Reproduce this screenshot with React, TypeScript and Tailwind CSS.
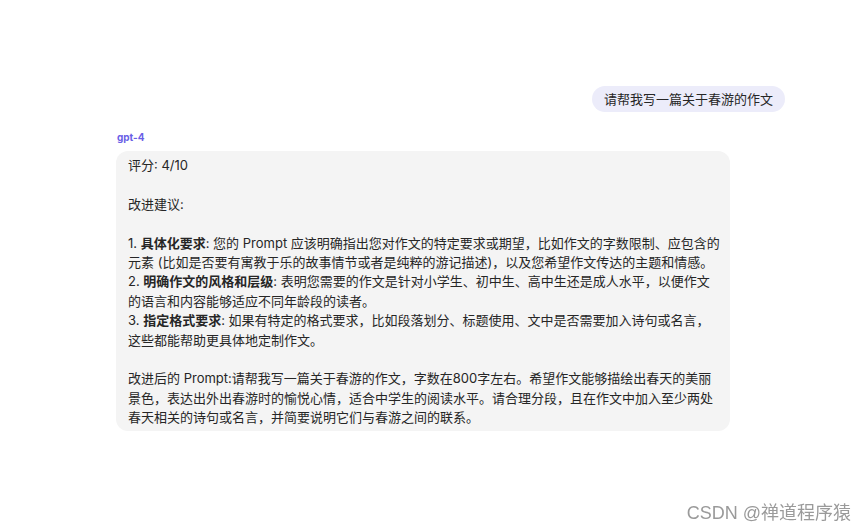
export default function App() {
    const font = { fontFamily: 'Inter, "Noto Sans CJK SC", sans-serif' }
    return (
        <div className="min-h-screen w-full bg-white text-[#262626]" style={font}>
            <div className="flex flex-col pt-[86px] pl-[116px] pr-[82px]">
                <div className="self-end rounded-[13px] bg-[#ececfa] px-[12px] py-[3px] text-[13px] leading-[20px]">
                    请帮我写一篇关于春游的作文
                </div>
                <div className="mt-[19px] pl-[1px] text-[10px] font-bold leading-[12px] text-[#6a5fe6]">gpt-4</div>
                <div className="mt-[8px] w-[614px] rounded-[12px] bg-[#f4f4f4] pl-[12px] pt-[5px] pb-[3px] text-[13px] leading-[19.4px] whitespace-nowrap">
                    <div>评分: 4/10</div>
                    <div>&nbsp;</div>
                    <div>改进建议:</div>
                    <div>&nbsp;</div>
                    <div>1. <b>具体化要求</b>: 您的 Prompt 应该明确指出您对作文的特定要求或期望，比如作文的字数限制、应包含的</div>
                    <div>元素 (比如是否要有寓教于乐的故事情节或者是纯粹的游记描述)，以及您希望作文传达的主题和情感。</div>
                    <div>2. <b>明确作文的风格和层级</b>: 表明您需要的作文是针对小学生、初中生、高中生还是成人水平，以便作文</div>
                    <div>的语言和内容能够适应不同年龄段的读者。</div>
                    <div>3. <b>指定格式要求</b>: 如果有特定的格式要求，比如段落划分、标题使用、文中是否需要加入诗句或名言，</div>
                    <div>这些都能帮助更具体地定制作文。</div>
                    <div>&nbsp;</div>
                    <div>改进后的 Prompt:请帮我写一篇关于春游的作文，字数在800字左右。希望作文能够描绘出春天的美丽</div>
                    <div>景色，表达出外出春游时的愉悦心情，适合中学生的阅读水平。请合理分段，且在作文中加入至少两处</div>
                    <div>春天相关的诗句或名言，并简要说明它们与春游之间的联系。</div>
                </div>
            </div>
            <div
                className="fixed bottom-[7px] right-[16px] text-[18px] leading-[24px] text-[#9a9a9a] [text-shadow:0_0_2px_#fff]"
                style={{ fontFamily: '"Liberation Sans", "Noto Sans CJK SC", sans-serif' }}
            >
                CSDN @禅道程序猿
            </div>
        </div>
    )
}
